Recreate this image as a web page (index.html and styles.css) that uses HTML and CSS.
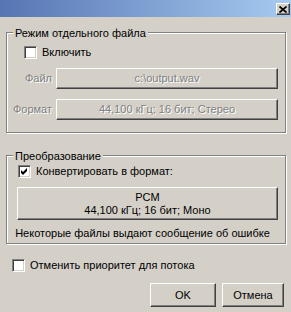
FILE: index.html
```html
<!DOCTYPE html>
<html lang="ru">
<head>
  <meta charset="UTF-8">
  <title>Режим отдельного файла</title>
  <link rel="stylesheet" href="styles.css">
</head>
<body>
  <div class="window">
    <div class="titlebar">
      <span class="close">
        <svg width="8" height="7" viewBox="0 0 8 7"><path d="M0.5 0.5 L7.5 6.5 M7.5 0.5 L0.5 6.5" stroke="#000" stroke-width="1.7" fill="none"/></svg>
      </span>
    </div>

    <div class="group group-file">
      <div class="legend">Режим отдельного файла</div>
      <label class="check check-enable"><span class="box"></span>Включить</label>
      <div class="field field-file">
        <span class="field-label disabled">Файл</span>
        <div class="btn btn-field disabled">c:\output.wav</div>
      </div>
      <div class="field field-format">
        <span class="field-label disabled">Формат</span>
        <div class="btn btn-field disabled">44,100 кГц; 16 бит; Стерео</div>
      </div>
    </div>

    <div class="group group-convert">
      <div class="legend">Преобразование</div>
      <label class="check check-convert">
        <span class="box"><svg width="7" height="7" viewBox="0 0 7 7"><path d="M0 2 L2 4 L6 0 L6 3 L2 7 L0 5 Z" fill="#000"/></svg></span>Конвертировать в формат:
      </label>
      <div class="btn btn-format">
        <span>PCM</span>
        <span>44,100 кГц; 16 бит; Моно</span>
      </div>
      <p class="note">Некоторые файлы выдают сообщение об ошибке</p>
    </div>

    <label class="check check-priority"><span class="box"></span>Отменить приоритет для потока</label>

    <div class="actions">
      <div class="btn btn-ok">OK</div>
      <div class="btn btn-cancel">Отмена</div>
    </div>
  </div>
</body>
</html>
```

FILE: styles.css
```css
body {
  margin: 0;
  background-color: #d4d0c8;
  color: #000;
  font-family: "Liberation Sans", Arial, sans-serif;
  font-size: 11px;
  line-height: 13px;
}
.window {
  width: 291px;
  height: 312px;
  display: flex;
  flex-direction: column;
  overflow: hidden;
}
.titlebar {
  height: 17px;
  box-sizing: border-box;
  padding: 3px 1px 0 0;
  display: flex;
  justify-content: flex-end;
  align-items: flex-start;
  background: linear-gradient(to right, #5675b3, #a6caf0);
}
.close {
  width: 14px;
  height: 12px;
  box-sizing: border-box;
  display: flex;
  align-items: center;
  justify-content: center;
  background-color: #d4d0c8;
  border: 1px solid;
  border-color: #fff #404040 #404040 #fff;
  box-shadow: inset -1px -1px 0 #808080;
}
.group {
  margin: 0 5px 0 6px;
  border: 1px solid #808080;
  box-shadow: 1px 1px 0 #fff, inset 1px 1px 0 #fff;
  display: flex;
  flex-direction: column;
}
.legend {
  align-self: flex-start;
  margin: -6px 0 0 6px;
  padding: 0 2px;
  background-color: #d4d0c8;
}
.group-file {
  margin-top: 15px;
  padding: 0 7px 12px 0;
}
.group-convert {
  margin-top: 22px;
  padding: 0 7px 3px 0;
}
.check {
  display: flex;
  align-items: center;
  gap: 5px;
  align-self: flex-start;
}
.box {
  width: 13px;
  height: 13px;
  box-sizing: border-box;
  display: flex;
  align-items: center;
  justify-content: center;
  background-color: #fff;
  border: 1px solid;
  border-color: #808080 #fff #fff #808080;
  box-shadow: inset 1px 1px 0 #404040, inset -1px -1px 0 #d4d0c8;
}
.check-enable {
  margin: 6px 0 0 17px;
}
.check-convert {
  margin: 2px 0 0 11px;
}
.check-priority {
  margin: 15px 0 0 12px;
}
.field {
  display: flex;
  align-items: center;
}
.field-file {
  margin-top: 9px;
}
.field-format {
  margin-top: 10px;
}
.field-label {
  width: 49px;
  box-sizing: border-box;
  padding-right: 4px;
  text-align: right;
}
.disabled {
  color: #808080;
  text-shadow: 1px 1px 0 #fff;
}
.btn {
  box-sizing: border-box;
  display: flex;
  align-items: center;
  justify-content: center;
  background-color: #d4d0c8;
  border: 1px solid;
  border-color: #fff #404040 #404040 #fff;
  box-shadow: inset -1px -1px 0 #808080;
}
.btn-field {
  flex: 1;
  height: 21px;
}
.btn-format {
  flex-direction: column;
  height: 33px;
  margin: 9px 0 0 10px;
}
.note {
  margin: 7px 0 0 0;
  text-align: center;
}
.actions {
  margin-top: 11px;
  padding-right: 7px;
  display: flex;
  justify-content: flex-end;
  gap: 6px;
}
.btn-ok {
  width: 66px;
  height: 24px;
}
.btn-cancel {
  width: 62px;
  height: 24px;
}
```
